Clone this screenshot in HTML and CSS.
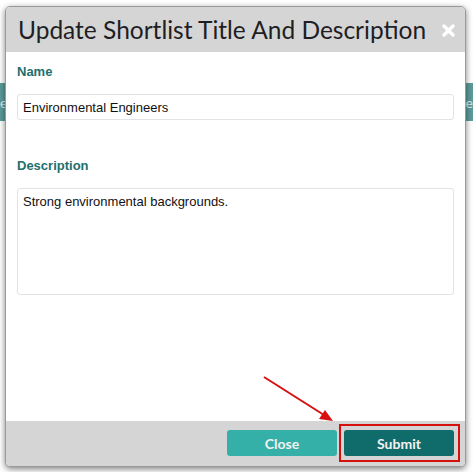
FILE: index.html
```html
<!DOCTYPE html>
<html>
<head>
<meta charset="utf-8">
<link rel="stylesheet" href="styles.css">
</head>
<body>
<div class="backdrop">
  <div class="bg-bar"><span>e</span><span>e</span></div>
</div>
<div class="modal">
  <div class="modal-header">
    <h1 class="modal-title">Update Shortlist Title And Description</h1>
    <button class="modal-close" aria-label="Close">
      <svg width="13" height="13" viewBox="0 0 13 13"><path d="M2 2 L11 11 M11 2 L2 11" stroke="#fff" stroke-width="3.4" stroke-linecap="round"/></svg>
    </button>
  </div>
  <div class="modal-body">
    <label class="field-label">Name</label>
    <div class="text-input">Environmental Engineers</div>
    <label class="field-label desc-label">Description</label>
    <div class="text-area">Strong environmental backgrounds.</div>
  </div>
  <div class="modal-footer">
    <button class="btn btn-close">Close</button>
    <button class="btn btn-submit">Submit</button>
  </div>
</div>
<div class="highlight"></div>
<svg class="arrow" width="473" height="472" viewBox="0 0 473 472">
  <line x1="264" y1="377" x2="324" y2="415" stroke="#d60f0f" stroke-width="2"/>
  <polygon points="333,421 319,419 325,410" fill="#d60f0f"/>
</svg>
</body>
</html>
```

FILE: styles.css
```css
html, body {
  margin: 0;
  padding: 0;
  background: #fff;
  width: 473px;
  height: 472px;
  overflow: hidden;
}
body {
  font-family: "Liberation Sans", Arial, sans-serif;
}
.backdrop {
  padding-top: 83px;
}
.bg-bar {
  height: 38px;
  background: #5b9c9b;
  color: #dfeeee;
  display: flex;
  justify-content: space-between;
  align-items: center;
  font-family: Lato, sans-serif;
  font-size: 14px;
  padding: 0;
}
.modal {
  position: absolute;
  left: 5px;
  top: 6px;
  width: 461px;
  height: 461px;
  box-sizing: border-box;
  border: 1px solid #9a9a9a;
  border-radius: 5px;
  background: #fff;
  box-shadow: 0 2px 6px rgba(0,0,0,0.5);
  display: flex;
  flex-direction: column;
  overflow: hidden;
}
.modal-header {
  height: 45px;
  flex: none;
  background: #d5d5d5;
  display: flex;
  align-items: center;
  justify-content: space-between;
  padding: 0 10px 0 12px;
}
.modal-title {
  margin: 0;
  font-family: Lato, sans-serif;
  font-weight: 400;
  font-size: 24.5px;
  color: #1e1e24;
}
.modal-close {
  border: 0;
  background: none;
  padding: 0;
  width: 13px;
  height: 13px;
  margin-top: 1px;
  display: flex;
}
.modal-body {
  flex: 1;
  padding: 12px 11px 0 11px;
  display: flex;
  flex-direction: column;
}
.field-label {
  font-size: 13px;
  font-weight: 700;
  color: #226f6e;
  line-height: 15px;
  height: 15px;
}
.desc-label {
  margin-top: 38px;
}
.text-input {
  margin-top: 15px;
  height: 26px;
  box-sizing: border-box;
  border: 1px solid #e3e3e3;
  border-radius: 3px;
  padding: 5px 5px 0 5px;
  font-size: 13px;
  color: #111;
  line-height: 16px;
}
.text-area {
  margin-top: 15px;
  height: 107px;
  box-sizing: border-box;
  border: 1px solid #e3e3e3;
  border-radius: 3px;
  padding: 5px 5px;
  font-size: 13px;
  color: #111;
  line-height: 16px;
}
.modal-footer {
  height: 45px;
  flex: none;
  background: #d5d5d5;
  display: flex;
  justify-content: flex-end;
  align-items: flex-start;
  gap: 7px;
  padding: 9px 11px 0 0;
  box-sizing: border-box;
}
.btn {
  width: 110px;
  height: 26px;
  border: 0;
  border-radius: 3px;
  color: #f2f2f2;
  font-family: Lato, sans-serif;
  font-weight: 700;
  font-size: 14px;
  padding: 0;
}
.btn-close { background: #35b0a8; }
.btn-submit { background: #106b6b; }

.highlight {
  position: absolute;
  left: 339px;
  top: 424px;
  width: 121px;
  height: 38px;
  box-sizing: border-box;
  border: 2px solid #d60f0f;
}
.arrow {
  position: absolute;
  left: 0;
  top: 0;
  pointer-events: none;
}
```
